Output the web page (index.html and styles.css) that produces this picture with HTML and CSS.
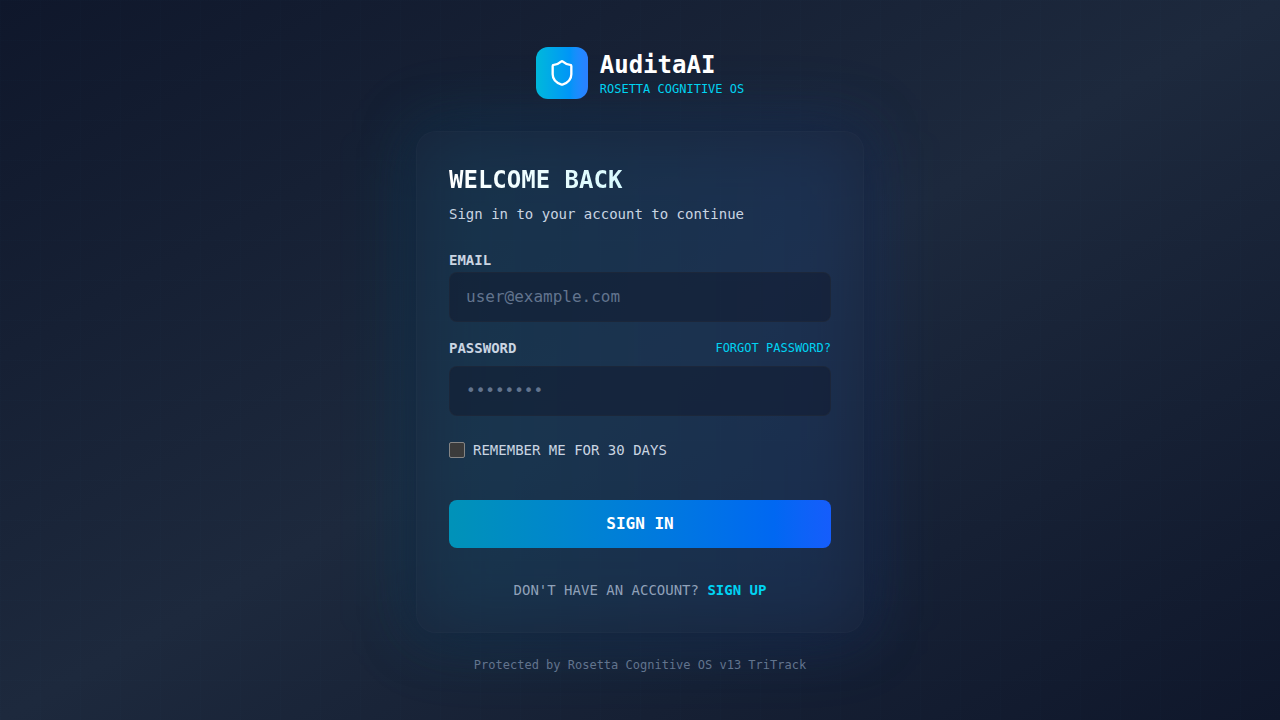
FILE: index.html
```html
<!DOCTYPE html>
<html lang="en">
<head>
<meta charset="utf-8">
<meta name="viewport" content="width=device-width, initial-scale=1">
<title>Sign in - AuditaAI</title>
<link rel="stylesheet" href="styles.css">
</head>
<body>
<div class="page">
  <main class="column">
    <header class="brand">
      <span class="logo">
        <svg viewBox="0 0 24 24" width="28" height="28" fill="none" stroke="currentColor" stroke-width="2" stroke-linecap="round" stroke-linejoin="round" aria-hidden="true">
          <path d="M20 13c0 5-3.500 7.500-7.660 8.950a1 1 0 0 1-.67-.01C7.500 20.500 4 18 4 13V6a1 1 0 0 1 1-1c2 0 4.500-1.200 6.240-2.720a1.170 1.170 0 0 1 1.520 0C14.510 3.810 17 5 19 5a1 1 0 0 1 1 1z"/>
        </svg>
      </span>
      <div>
        <div class="brand-name">AuditaAI</div>
        <div class="brand-tag">ROSETTA COGNITIVE OS</div>
      </div>
    </header>
    <div class="card-wrap">
      <div class="glow"></div>
      <section class="card">
        <h1 class="title">WELCOME BACK</h1>
        <p class="subtitle">Sign in to your account to continue</p>
        <form class="form">
          <div>
            <label class="label" for="email">EMAIL</label>
            <input class="input" id="email" type="email" placeholder="user@example.com">
          </div>
          <div>
            <div class="label-row">
              <label class="label" for="password">PASSWORD</label>
              <a class="forgot" href="#">FORGOT PASSWORD?</a>
            </div>
            <input class="input" id="password" type="password" placeholder="••••••••">
          </div>
          <div class="remember">
            <input class="check" id="remember" type="checkbox">
            <label for="remember">REMEMBER ME FOR 30 DAYS</label>
          </div>
          <button class="submit" type="submit">SIGN IN</button>
        </form>
        <p class="signup">DON'T HAVE AN ACCOUNT? <a class="signup-link" href="#">SIGN UP</a></p>
      </section>
    </div>
    <footer class="footer">Protected by Rosetta Cognitive OS v13 TriTrack</footer>
  </main>
</div>
</body>
</html>
```
FILE: styles.css
```css
* {
  box-sizing: border-box;
  margin: 0;
}

body {
  font-family: "DejaVu Sans Mono", monospace;
  font-size: 16px;
  line-height: 24px;
  color: #fff;
}

a {
  text-decoration: none;
}

.page {
  display: flex;
  align-items: center;
  justify-content: center;
  min-height: 100vh;
  padding: 16px;
  overflow: hidden;
  background:
    linear-gradient(rgba(59, 130, 246, 0.01) 1px, transparent 1px) 0 0 / 40px 40px,
    linear-gradient(90deg, rgba(59, 130, 246, 0.01) 1px, transparent 1px) 0 0 / 40px 40px,
    linear-gradient(to bottom right, #0f172b, #1d293d, #0f172b);
}

.column {
  width: 100%;
  max-width: 448px;
}

.brand {
  position: relative;
  z-index: 1;
  display: flex;
  align-items: center;
  justify-content: center;
  gap: 12px;
  margin-bottom: 32px;
}

.logo {
  display: flex;
  padding: 12px;
  border-radius: 12px;
  background: linear-gradient(to right in oklab, oklch(71.5% 0.143 215.221), oklch(62.3% 0.214 259.815));
}

.brand-name {
  font-size: 24px;
  line-height: 32px;
  font-weight: 700;
}

.brand-tag {
  font-size: 12px;
  line-height: 16px;
  color: #00d3f2;
}

.card-wrap {
  position: relative;
}

.glow {
  position: absolute;
  inset: 0;
  border-radius: 16px;
  background: linear-gradient(to right in oklab, rgba(0, 184, 219, 0.2), rgba(43, 127, 255, 0.2));
  filter: blur(36px);
}

.card {
  position: relative;
  padding: 32px;
  border: 1px solid rgba(255, 255, 255, 0.02);
  border-radius: 20px;
  background: rgba(26, 38, 62, 0.5);
  box-shadow: 0 0 50px rgba(18, 27, 52, 0.8);
}

.title {
  font-size: 24px;
  line-height: 32px;
  font-weight: 700;
  color: transparent;
  background: linear-gradient(to right in oklab, #fff, #a2f4fd);
  background-clip: text;
}

.subtitle {
  margin-top: 8px;
  font-size: 14px;
  line-height: 20px;
  color: #cad5e2;
}

.form {
  display: flex;
  flex-direction: column;
  gap: 16px;
  margin-top: 24px;
}

.label {
  font-size: 14px;
  font-weight: 700;
  color: #cad5e2;
}

.label-row {
  display: flex;
  align-items: center;
  justify-content: space-between;
  height: 20px;
  margin-bottom: 8px;
}

.forgot {
  font-size: 12px;
  line-height: 16px;
  color: #00d3f2;
}

.input {
  display: block;
  width: 100%;
  height: 50px;
  padding: 12px 16px 14px;
  border: 1px solid rgba(32, 41, 58, 0.7);
  border-radius: 8px;
  background: rgba(15, 23, 43, 0.5);
  font: inherit;
  color: #fff;
}

.input::placeholder {
  color: #62748e;
}

.remember {
  display: flex;
  align-items: center;
  gap: 8px;
  margin-top: 8px;
  font-size: 14px;
  line-height: 20px;
  color: #cad5e2;
}

.check {
  appearance: none;
  width: 16px;
  height: 16px;
  border: 1px solid #858585;
  border-radius: 2px;
  background: #3b3b3b;
}

.submit {
  height: 48px;
  margin-top: 24px;
  border: 0;
  border-radius: 8px;
  background: linear-gradient(to right in oklab, oklch(60.9% 0.126 221.723), oklch(54.6% 0.245 262.881));
  font: inherit;
  font-weight: 700;
  color: #fff;
}

.signup {
  margin-top: 32px;
  font-size: 14px;
  line-height: 20px;
  text-align: center;
  color: #90a1b9;
}

.signup-link {
  font-weight: 700;
  color: #00d3f2;
}

.footer {
  position: relative;
  margin-top: 24px;
  font-size: 12px;
  line-height: 16px;
  text-align: center;
  color: #62748e;
}
```
